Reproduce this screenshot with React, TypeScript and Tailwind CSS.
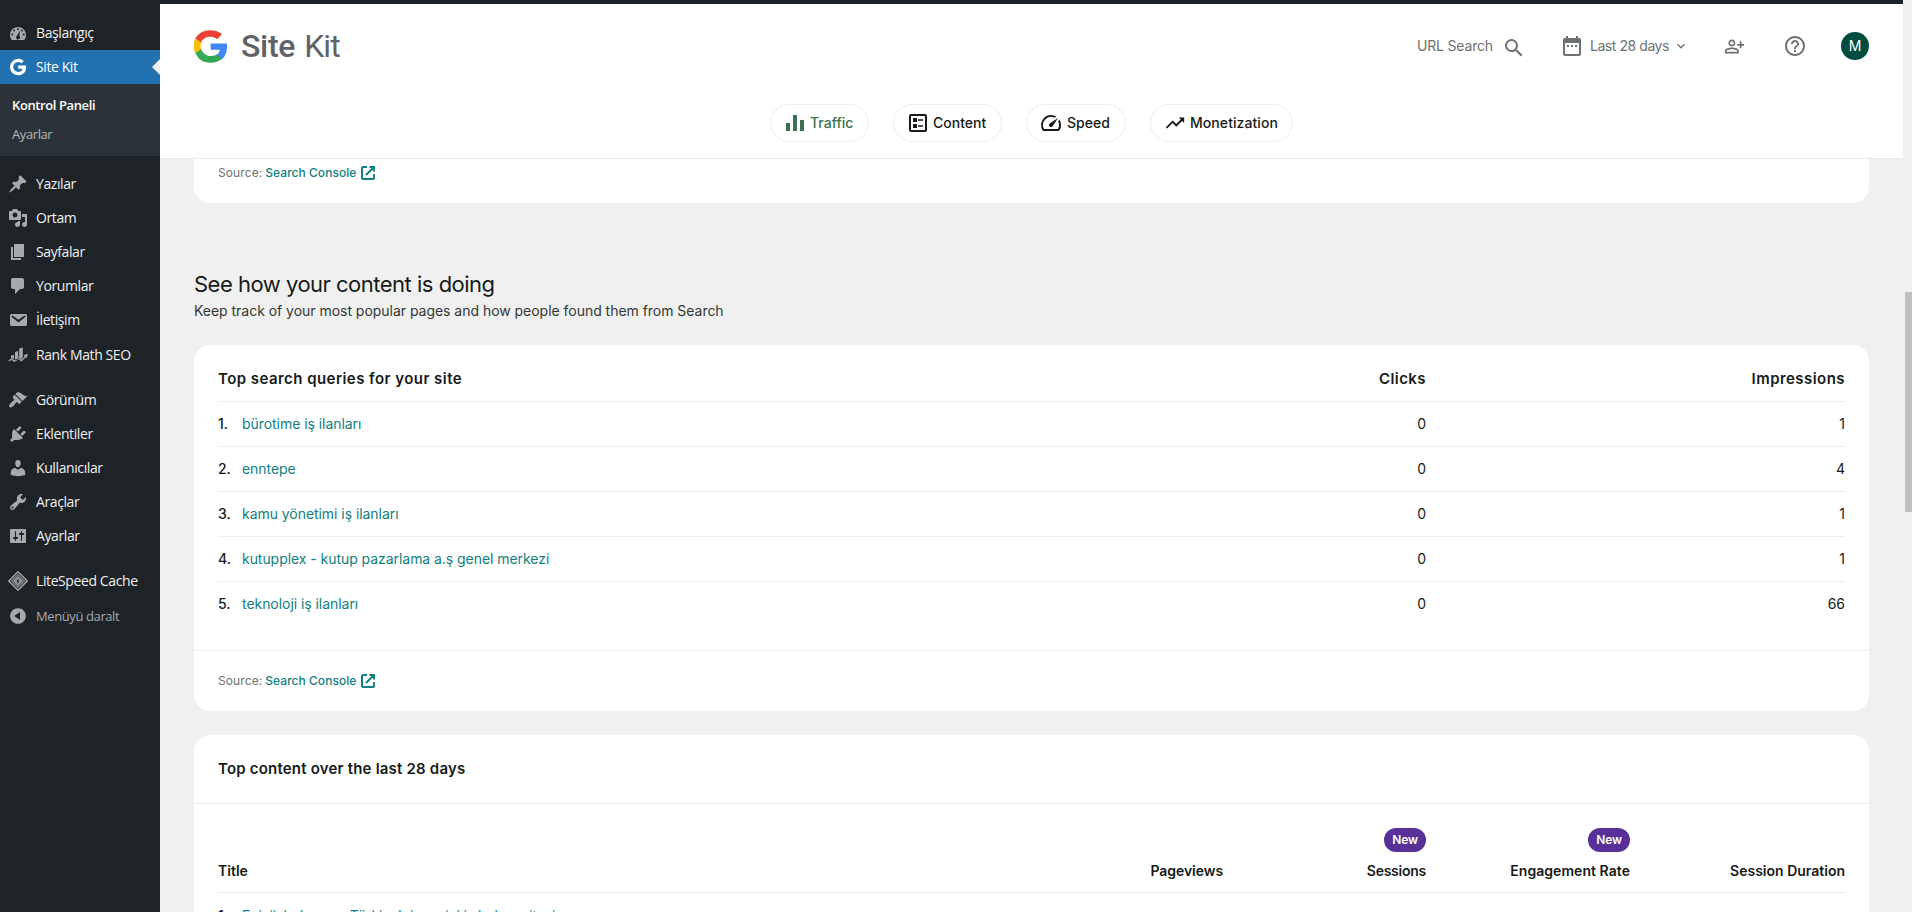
import type { ReactNode } from 'react';
import {
  MdDateRange,
  MdHelpOutline,
  MdKeyboardArrowDown,
  MdOutlinePersonAddAlt,
  MdOutlineSpeed,
  MdSearch,
  MdTrendingUp
} from 'react-icons/md';

const icons = {
  dashboard:
    'M3.76 17h12.48A7.953 7.953 0 0 0 18 12c0-4.418-3.582-8-8-8s-8 3.582-8 8c0 1.9.66 3.65 1.76 5zM10 5a1 1 0 1 1 0 2 1 1 0 0 1 0-2zM6 6.4a1 1 0 1 1 0 2 1 1 0 0 1 0-2zm8 0a1 1 0 1 1 0 2 1 1 0 0 1 0-2zM4.3 10.4a1 1 0 1 1 0 2 1 1 0 0 1 0-2zm11.4 0a1 1 0 1 1 0 2 1 1 0 0 1 0-2zM11.9 7.6l-.5 5.2a2 2 0 1 1-2.4-.1z',
  post: 'M10.44 3.02l1.82-1.82 6.36 6.35-1.83 1.82c-1.05-.68-2.48-.57-3.41.36l-.75.75c-.92.93-1.04 2.35-.35 3.41l-1.83 1.82-2.41-2.41-2.8 2.79c-.42.42-3.38 2.71-3.8 2.29s1.86-3.39 2.28-3.81l2.79-2.79L4.1 9.36l1.83-1.82c1.05.69 2.48.57 3.4-.36l.75-.75c.93-.92 1.05-2.35.36-3.41z',
  media:
    'M13 11V4c0-.55-.45-1-1-1h-1.67L9 1H5L3.67 3H2c-.55 0-1 .45-1 1v7c0 .55.45 1 1 1h10c.55 0 1-.45 1-1zM7 4.5c1.38 0 2.5 1.12 2.5 2.5S8.38 9.5 7 9.5 4.5 8.38 4.5 7 5.62 4.5 7 4.5zM14 6h5v10.5c0 1.38-1.12 2.5-2.5 2.5S14 17.88 14 16.5s1.12-2.5 2.5-2.5c.17 0 .34.02.5.05V9h-3V6zM10 14.05V13h2v3.5c0 1.38-1.12 2.5-2.5 2.5S7 17.88 7 16.5 8.12 14 9.5 14c.17 0 .34.02.5.05z',
  page: 'M6 15V2h10v13H6zm-1 1h8v2H3V5h2v11z',
  comments: 'M5 2h9c1.1 0 2 .9 2 2v7c0 1.1-.9 2-2 2h-2l-5 5v-5H5c-1.1 0-2-.9-2-2V4c0-1.1.9-2 2-2z',
  email:
    'M3.87 4h13.25C18.37 4 19 4.59 19 5.79v8.42c0 1.19-.63 1.79-1.88 1.79H3.87c-1.25 0-1.88-.6-1.88-1.79V5.79c0-1.2.63-1.79 1.88-1.79zm6.62 8.6l6.74-5.53c.24-.2.43-.66.13-1.07-.29-.41-.82-.42-1.17-.17l-5.7 3.86L4.8 5.83c-.35-.25-.88-.24-1.17.17-.3.41-.11.87.13 1.07z',
  rank: 'M3 10.6l3-.9v4.6l-1.7-1-1.3 1zM7 7l3.2-1v8L7 15.5zM11.2 3.6l3.6-1v9.4l-2.2 2.6-1.4-1.4zM15.4 10.2l4.4-1.4-1 4.4-1-1-4.3 4.3-2.8-2.2-4.3 2.8-3-2L1 16.5l-.6-1 2.8-2.2 3.2 2 4.4-2.8 2.6 2.1 3.3-3.3z',
  appearance:
    'M14.48 11.06L7.41 3.99l1.5-1.5c.5-.56 2.3-.47 3.51.32 1.21.8 1.43 1.28 2.91 2.1 1.18.64 2.45 1.26 4.45.85zm-.71.71L6.7 4.7 4.93 6.47c-.39.39-.39 1.02 0 1.41l1.06 1.06c.39.39.39 1.03 0 1.42-.6.6-1.43 1.11-2.21 1.69-.35.26-.7.53-1.01.84C1.43 14.23.4 16.08 1.4 17.07c.99 1 2.84-.03 4.18-1.36.31-.31.58-.66.85-1.02.57-.78 1.08-1.61 1.69-2.21.39-.39 1.02-.39 1.41 0l1.06 1.06c.39.39 1.02.39 1.41 0z',
  plugins:
    'M13.11 4.36L9.87 7.6 8 5.73l3.24-3.24c.35-.34 1.05-.2 1.56.32.52.51.66 1.21.31 1.55zm-8 1.77l.91-1.12 9.01 9.01-1.19.84c-.71.71-2.63 1.16-3.82 1.16H6.14L4.9 17.26c-.59.59-1.54.59-2.12 0-.59-.58-.59-1.53 0-2.12l1.24-1.24v-3.88c0-1.13.4-3.19 1.09-3.89zm7.26 3.97l3.24-3.24c.34-.35 1.04-.21 1.55.31.52.51.66 1.21.31 1.55l-3.24 3.25z',
  users:
    'M10 9.25c-2.27 0-2.73-3.44-2.73-3.44C7 4.02 7.82 2 9.97 2c2.16 0 2.98 2.02 2.71 3.81 0 0-.41 3.44-2.68 3.44zm0 2.57L12.72 10c2.39 0 4.52 2.33 4.52 4.53v2.49s-3.65 1.13-7.24 1.13c-3.65 0-7.24-1.13-7.24-1.13v-2.49c0-2.25 1.94-4.48 4.47-4.48z',
  tools:
    'M16.68 9.77c-1.34 1.34-3.3 1.67-4.95.99l-5.41 6.52c-.99.99-2.59.99-3.58 0s-.99-2.59 0-3.57l6.52-5.42c-.68-1.65-.35-3.61.99-4.95 1.28-1.28 3.12-1.62 4.72-1.06l-2.89 2.89 2.82 2.82 2.86-2.87c.53 1.58.18 3.39-1.08 4.65zM3.81 16.21c.4.39 1.04.39 1.43 0 .4-.4.4-1.04 0-1.43-.39-.4-1.03-.4-1.43 0-.39.39-.39 1.03 0 1.43z',
  settings:
    'M18 16V4c0-.55-.45-1-1-1H3c-.55 0-1 .45-1 1v12c0 .55.45 1 1 1h14c.55 0 1-.45 1-1zM8 11h1c.55 0 1 .45 1 1s-.45 1-1 1H8v1.5c0 .28-.22.5-.5.5s-.5-.22-.5-.5V13H6c-.55 0-1-.45-1-1s.45-1 1-1h1V5.5c0-.28.22-.5.5-.5s.5.22.5.5V11zm5-2h-1c-.55 0-1-.45-1-1s.45-1 1-1h1V5.5c0-.28.22-.5.5-.5s.5.22.5.5V7h1c.55 0 1 .45 1 1s-.45 1-1 1h-1v5.5c0 .28-.22.5-.5.5s-.5-.22-.5-.5V9z',
  collapse:
    'M10 2.16c4.33 0 7.84 3.51 7.84 7.84s-3.51 7.84-7.84 7.84S2.16 14.33 2.16 10 5.67 2.16 10 2.16zm2 11.72V6.12L6.18 9.97z'
};

const contentMenu = [
  { label: 'Yazılar', icon: icons.post },
  { label: 'Ortam', icon: icons.media },
  { label: 'Sayfalar', icon: icons.page },
  { label: 'Yorumlar', icon: icons.comments },
  { label: 'İletişim', icon: icons.email },
  { label: 'Rank Math SEO', icon: icons.rank }
];

const systemMenu = [
  { label: 'Görünüm', icon: icons.appearance },
  { label: 'Eklentiler', icon: icons.plugins },
  { label: 'Kullanıcılar', icon: icons.users },
  { label: 'Araçlar', icon: icons.tools },
  { label: 'Ayarlar', icon: icons.settings }
];

const queries = [
  { query: 'bürotime iş ilanları', clicks: 0, impressions: 1 },
  { query: 'enntepe', clicks: 0, impressions: 4 },
  { query: 'kamu yönetimi iş ilanları', clicks: 0, impressions: 1 },
  { query: 'kutupplex - kutup pazarlama a.ş genel merkezi', clicks: 0, impressions: 1 },
  { query: 'teknoloji iş ilanları', clicks: 0, impressions: 66 }
];

const DashIcon = ({ d }: { d: string }) => (
  <svg viewBox="0 0 20 20" className="size-5 shrink-0 fill-[#a7aaad]" fillRule="evenodd">
    <path d={d} />
  </svg>
);

const LiteSpeedIcon = () => (
  <svg viewBox="0 0 20 20" className="size-5 shrink-0" fill="none" stroke="#a7aaad">
    <path d="M10 .8l9.2 9.2-9.2 9.2L.8 10z" strokeWidth="1.4" />
    <path d="M10 3.4l6.6 6.6-6.6 6.6L3.4 10z" fill="#4f555a" strokeWidth="1" />
    <path d="M10 5.8l4.2 4.2-4.2 4.2L5.8 10z" fill="#8c9094" strokeWidth="1" />
    <path d="M10.6 7.8L9 10.2h2L9.4 12.3" stroke="#1d2327" strokeWidth=".9" />
  </svg>
);

const MenuItem = ({ label, children, muted }: { label: string; children: ReactNode; muted?: boolean }) => (
  <a
    className={`flex h-[34.2px] items-center gap-2 pl-2 ${muted ? 'text-[13px] text-[#a7aaad]' : 'text-[#f0f0f1]'}`}
  >
    {children}
    <span>{label}</span>
  </a>
);

function Sidebar() {
  return (
    <aside className="w-40 shrink-0 bg-[#1d2327] pt-[15.8px] font-['Open_Sans',sans-serif] text-[14px] leading-[18px] tracking-[-0.4px]">
      <MenuItem label="Başlangıç">
        <DashIcon d={icons.dashboard} />
      </MenuItem>
      <a className="relative flex h-[34px] items-center gap-2 bg-[#2271b1] pl-2 text-white">
        <svg viewBox="0 0 24 24" className="size-5 shrink-0 fill-white">
          <path d="M12.2 10.2v3.8h5.3c-.5 2.4-2.5 3.9-5.3 3.9a5.9 5.9 0 1 1 3.8-10.4l2.9-2.8A9.9 9.9 0 1 0 12.2 22c5.8 0 9.6-4.1 9.6-9.8 0-.7-.1-1.3-.2-2z" />
        </svg>
        <span>Site Kit</span>
        <span className="absolute top-[9px] right-0 border-y-8 border-r-8 border-y-transparent border-r-[#f0f0f1]" />
      </a>
      <div className="flex h-[72px] flex-col gap-[11px] bg-[#2c3338] pt-3 pl-3 text-[13px]">
        <span className="font-semibold text-white">Kontrol Paneli</span>
        <span className="text-[#b4b7ba]">Ayarlar</span>
      </div>

      <div className="pt-[10.6px]">
        {contentMenu.map((item) => (
          <MenuItem key={item.label} label={item.label}>
            <DashIcon d={item.icon} />
          </MenuItem>
        ))}
      </div>
      <div className="pt-[10.8px]">
        {systemMenu.map((item) => (
          <MenuItem key={item.label} label={item.label}>
            <DashIcon d={item.icon} />
          </MenuItem>
        ))}
      </div>
      <div className="pt-[10.8px]">
        <MenuItem label="LiteSpeed Cache">
          <LiteSpeedIcon />
        </MenuItem>
        <MenuItem label="Menüyü daralt" muted>
          <DashIcon d={icons.collapse} />
        </MenuItem>
      </div>
    </aside>
  );
}

const Logo = () => (
  <div className="flex items-center">
    <svg viewBox="2 2 20.2 20" className="h-[33px] w-[33px]">
      <path fill="#4285f4" d="M22.2 12.23c0-.71-.06-1.39-.18-2.04H12.2v3.86h5.61c-.24 1.3-.98 2.41-2.08 3.15v2.62h3.37c1.97-1.82 3.1-4.49 3.1-7.59z" />
      <path fill="#34a853" d="M12.2 22c2.81 0 5.17-.93 6.9-2.53l-3.37-2.61c-.93.63-2.13 1-3.53 1-2.71 0-5.01-1.83-5.83-4.3H2.89v2.69A10.42 10.42 0 0 0 12.2 22z" />
      <path fill="#fbbc05" d="M6.37 13.56a6.2 6.2 0 0 1 0-3.96V6.91H2.89a10.4 10.4 0 0 0 0 9.34z" />
      <path fill="#ea4335" d="M12.2 5.98c1.53 0 2.9.53 3.98 1.56l2.99-2.99C17.36 2.86 15 2 12.2 2a10.42 10.42 0 0 0-9.31 4.91l3.48 2.69c.82-2.47 3.12-3.62 5.83-3.62z" />
    </svg>
    <div className="mb-[2px] ml-[14px] flex gap-[9px] font-[Roboto,sans-serif] text-[32px] leading-10 text-[#5f6368]">
      <span className="font-medium tracking-[-0.3px]">Site</span>
      <span className="tracking-[-0.9px]">Kit</span>
    </div>
  </div>
);

const TrafficIcon = () => (
  <svg viewBox="0 0 18 16" className="h-4 w-[18px] fill-[#3c7251]">
    <path d="M0 8h4v8H0zM7 0h4v16H7zM14 5h4v11h-4z" />
  </svg>
);

const ContentIcon = () => (
  <svg viewBox="0 0 18 18" className="size-[18px] fill-current" fillRule="evenodd">
    <path d="M2 0h14a2 2 0 0 1 2 2v14a2 2 0 0 1-2 2H2a2 2 0 0 1-2-2V2a2 2 0 0 1 2-2zm0 2v14h14V2zM4 4h4v4H4zM4 10h4v4H4zM9 5.2h5v1.6H9zM9 11.2h5v1.6H9z" />
  </svg>
);

const ExternalIcon = () => (
  <svg viewBox="0 0 14 14" className="size-[14px] fill-none stroke-current stroke-2">
    <path d="M6 1H2a1 1 0 0 0-1 1v10a1 1 0 0 0 1 1h10a1 1 0 0 0 1-1V8M8.500 1H13v4.500M13 1L5 9" />
  </svg>
);

type ChipProps = { label: string; className: string; children: ReactNode };

const Chip = ({ label, className, children }: ChipProps) => (
  <button
    className={`flex h-[38px] items-center gap-1.5 rounded-full border border-[#ebeef0] pl-[15px] text-sm font-medium ${className}`}
  >
    <span className="flex w-[18px] shrink-0 items-center justify-center">{children}</span>
    {label}
  </button>
);

function Header() {
  return (
    <header className="h-[155px] border-b border-[#e8eaec] bg-white pt-6">
      <div className="flex h-[37px] items-center justify-between px-[34px]">
        <Logo />
        <div className="-mt-[1px] flex items-center text-sm text-[#6c726e]">
          <span className="tracking-[-0.17px]">URL Search</span>
          <MdSearch size={24} className="mt-1 ml-[9px]" />
          <MdDateRange size={24} className="ml-[34px]" />
          <span className="ml-[6px] tracking-[-0.44px]">Last 28 days</span>
          <MdKeyboardArrowDown size={16} className="ml-1" />
          <MdOutlinePersonAddAlt size={21} className="ml-[35px]" />
          <MdHelpOutline size={24} className="ml-[38px]" />
          <span className="ml-[34px] flex size-7 items-center justify-center rounded-full bg-[#004d40] text-white">M</span>
        </div>
      </div>
      <nav className="mt-[39px] flex justify-center gap-6">
        <Chip label="Traffic" className="w-[99px] text-[#3c7251]">
          <TrafficIcon />
        </Chip>
        <Chip label="Content" className="w-[109px]">
          <ContentIcon />
        </Chip>
        <Chip label="Speed" className="w-[100px] gap-[7px]">
          <MdOutlineSpeed size={24} className="shrink-0" />
        </Chip>
        <Chip label="Monetization" className="w-[143px] tracking-[0.07px]">
          <MdTrendingUp size={22} className="shrink-0" />
        </Chip>
      </nav>
    </header>
  );
}

const Source = () => (
  <div className="flex items-center px-6 text-xs leading-4 text-[#6c726e]">
    <span className="tracking-[0.1px]">Source:</span>
    <a className="ml-[3px] flex items-center gap-[5px] font-medium tracking-[0.03px] text-[#108080]">
      Search Console
      <ExternalIcon />
    </a>
  </div>
);

const NewBadge = () => (
  <span className="flex h-6 items-center rounded-full bg-[#583097] px-2 text-xs font-semibold tracking-[-0.1px] text-white">
    New
  </span>
);

const Column = ({ label, className, isNew }: { label: string; className: string; isNew?: boolean }) => (
  <div className={`flex flex-col items-end ${className}`}>
    {isNew && <NewBadge />}
    <span className="mt-[9px] leading-5">{label}</span>
  </div>
);

export default function App() {
  return (
    <div className="flex h-[912px] w-[1912px] overflow-hidden bg-[#f0f0f0] font-[Inter,sans-serif] text-[#161b18]">
      <Sidebar />
      <div className="min-w-0 flex-1">
        <div className="h-1 bg-[#1d2327]" />
        <Header />
        <main className="px-[34px]">
          <section className="h-11 rounded-b-2xl bg-white pt-[6px]">
            <Source />
          </section>

          <div className="pt-[65px]">
            <h2 className="text-[22px] leading-8 tracking-[-0.5px]">See how your content is doing</h2>
            <p className="mt-[1px] text-sm leading-5 tracking-[-0.03px] text-[#333836]">
              Keep track of your most popular pages and how people found them from Search
            </p>
          </div>

          <section className="mt-6 h-[366px] rounded-2xl bg-white">
            <div className="mx-6 h-[305px] pt-3">
              <div className="flex h-[45px] items-center border-b border-[#ebeef0] text-[15px] font-semibold tracking-[0.45px]">
                <span className="flex-1">Top search queries for your site</span>
                <span className="w-[200px] text-right">Clicks</span>
                <span className="w-[419px] text-right">Impressions</span>
              </div>
              {queries.map((row, index) => (
                <div
                  key={row.query}
                  className="flex h-[45px] items-center border-b border-[#ebeef0] text-sm tracking-[-0.05px] last:border-transparent"
                >
                  <span className="w-6 font-medium">{index + 1}.</span>
                  <a className="flex-1 text-[#108080]">{row.query}</a>
                  <span className="w-[200px] text-right">{row.clicks}</span>
                  <span className="w-[419px] text-right">{row.impressions}</span>
                </div>
              ))}
            </div>
            <div className="border-t border-[#ebeef0] pt-[22px]">
              <Source />
            </div>
          </section>

          <section className="mt-6 h-[300px] rounded-t-2xl bg-white">
            <h3 className="flex h-[69px] items-center border-b border-[#ebeef0] px-6 text-[15px] font-semibold tracking-[0.2px]">
              Top content over the last 28 days
            </h3>
            <div className="px-6">
              <div className="flex h-[89px] items-end border-b border-[#ebeef0] pb-[11px] text-sm font-semibold">
                <span className="flex-1 leading-5">Title</span>
                <Column label="Pageviews" className="w-[150px] tracking-[-0.07px]" />
                <Column label="Sessions" className="w-[203px] tracking-[-0.25px]" isNew />
                <Column label="Engagement Rate" className="w-[204px] tracking-[0.05px]" isNew />
                <Column label="Session Duration" className="w-[215px]" />
              </div>
              <div className="flex h-[45px] items-center text-sm tracking-[-0.1px]">
                <span className="w-6 font-medium">1.</span>
                <a className="text-[#108080]">Eniyiisbul.com - Türkiye'nin en iyi iş bulma sitesi</a>
              </div>
            </div>
          </section>
        </main>
      </div>
      <div className="w-[9px] shrink-0 bg-[#f1f1f1] pt-[292px] pl-[2px]">
        <div className="h-[220px] bg-[#c1c1c1]" />
      </div>
    </div>
  );
}
